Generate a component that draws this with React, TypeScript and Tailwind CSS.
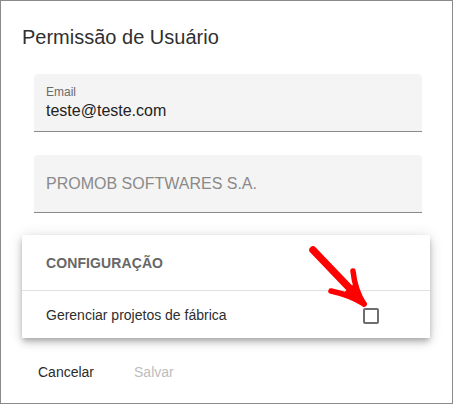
import React from "react";

export default function App() {
  return (
    <div className="relative w-[454px] h-[406px] bg-white" style={{ fontFamily: '"Liberation Sans", Arial, sans-serif' }}>
      <div className="w-[453px] h-[404px] border border-[#8a8a8a] box-border">
        <div className="pl-[21px] pt-[24px] text-[20px] leading-[24px] text-[#303030]">Permissão de Usuário</div>

        <div className="ml-[33px] mt-[25px] w-[388px] h-[58px] box-border bg-[#f4f4f4] rounded-t-[4px] border-b border-[#8a8a8a] px-[12px] pt-[11px]">
          <div className="text-[12px] leading-[14px] text-[#6a6a6a]">Email</div>
          <div className="mt-[2px] text-[16px] leading-[19px] text-[#222]">teste@teste.com</div>
        </div>

        <div className="ml-[33px] mt-[23px] w-[388px] h-[58px] box-border bg-[#f4f4f4] rounded-t-[4px] border-b border-[#8a8a8a] px-[12px] pt-[19px]">
          <div className="text-[16px] leading-[19px] text-[#8a8a8a]">PROMOB SOFTWARES S.A.</div>
        </div>

        <div className="ml-[21px] mt-[22px] w-[408px] h-[103px] bg-white shadow-[0_3px_5px_-1px_rgba(0,0,0,0.2),0_5px_8px_0_rgba(0,0,0,0.14),0_1px_14px_0_rgba(0,0,0,0.12)]">
          <div className="h-[55px] box-border pl-[24px] pt-[18px] text-[14px] leading-[20px] font-bold text-[#676767] tracking-[0.1px]">CONFIGURAÇÃO</div>
          <div className="h-px bg-[#e0e0e0]" />
          <div className="flex items-start h-[47px] pl-[24px]">
            <div className="pt-[14px] text-[14px] leading-[20px] text-[#2e2e2e]">Gerenciar projetos de fábrica</div>
            <div className="ml-auto mr-[51px] mt-[17px] w-[16px] h-[16px] box-border border-2 border-[#6e6e6e] rounded-[2px]" />
          </div>
        </div>

        <div className="flex pl-[37px] mt-[24px] text-[14px] leading-[20px]">
          <span className="text-[#2b2b2b]">Cancelar</span>
          <span className="ml-[40px] text-[#bdbdbd]">Salvar</span>
        </div>
      </div>

      <svg className="absolute left-0 top-0 pointer-events-none" width="454" height="406" viewBox="0 0 454 406">
        <path d="M313 250 L358 297" stroke="#ff0000" strokeWidth="7.5" strokeLinecap="round" fill="none" />
        <path d="M353 271 Q355 290 364 304" stroke="#ff0000" strokeWidth="5.5" strokeLinecap="round" fill="none" />
        <path d="M331 291 Q350 295 364 304" stroke="#ff0000" strokeWidth="5.5" strokeLinecap="round" fill="none" />
        <path d="M355 283 L364 304 L342 294 Z" fill="#ff0000" />
      </svg>
    </div>
  );
}
